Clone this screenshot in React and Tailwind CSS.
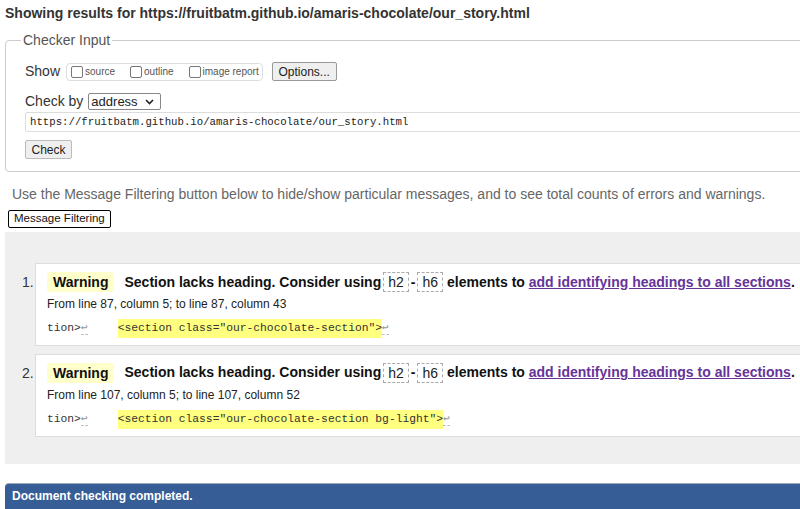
import React from "react";

const sans = { fontFamily: '"Liberation Sans", Arial, sans-serif' };
const mono = { fontFamily: '"Liberation Mono", "DejaVu Sans Mono", monospace' };

const Lf = () => (
  <span className="inline-block border-b border-dashed border-[#bbb] leading-[12px] text-[#999]">↩</span>
);

const Code = ({ children }) => (
  <code className="mx-[2px] inline-block border border-dashed border-[#aaa] bg-white px-[4px] py-[1px] font-normal text-[14px] leading-[16px] text-[#222]" style={sans}>
    {children}
  </code>
);

const Box = ({ label, first }) => (
  <>
    <span className={`${first ? "" : "ml-[15px]"} inline-block h-[12px] w-[12px] rounded-[2px] border border-[#777] bg-white`} />
    <span className="ml-[2px]">{label}</span>
  </>
);

const Message = ({ n, from, extract }) => (
  <li className="flex items-start">
    <span className="w-[30px] shrink-0 pt-[9px] pl-[17px] text-[14px] text-[#333]">{n}.</span>
    <div className="flex-1 border border-[#ddd] bg-white pl-[11px] pt-[8px] pb-[7px]">
      <p className="flex h-[20px] items-center text-[14px] font-bold text-[#111]">
        <span className="rounded-[3px] bg-[#ffffcc] px-[6px] leading-[20px]">Warning</span>
        <span className="ml-[10px]">Section lacks heading. Consider using</span>
        <Code>h2</Code>
        <span>-</span>
        <Code>h6</Code>
        <span className="ml-[2px]">elements to&nbsp;</span>
        <a href="#" className="text-[#663399] underline">add identifying headings to all sections</a>
        <span>.</span>
      </p>
      <p className="mt-[5px] text-[12px] leading-[14px] text-[#222]">{from}</p>
      <p className="mt-[8px] flex items-center text-[11.3px] text-[#333]" style={mono}>
        <span>tion&gt;</span>
        <Lf />
        <span className="ml-[30px] bg-[#ffff80] py-[1px]">{extract}</span>
        <Lf />
      </p>
    </div>
  </li>
);

export default function App() {
  return (
    <div className="w-[800px] h-[509px] overflow-hidden bg-white text-[#222]" style={sans}>
      <div className="w-[860px] px-[5px]">
        <h2 className="pt-[5px] text-[14px] font-bold leading-[16px] text-[#333]">
          Showing results for https://fruitbatm.github.io/amaris-chocolate/our_story.html
        </h2>

        <fieldset className="mt-[11px] rounded-[4px] border border-[#ccc] pl-[19px] pb-[10px]">
          <legend className="-ml-[4px] px-[2px] text-[14px] leading-[16px] text-[#555]">Checker Input</legend>

          <div className="mt-[13px] flex items-center">
            <span className="text-[14px] text-[#333]">Show</span>
            <div className="ml-[6px] flex h-[18px] items-center rounded-[4px] border border-[#ddd] pl-[4px] pr-[3px] text-[10px] text-[#555]">
              <Box label="source" first />
              <Box label="outline" />
              <Box label="image report" />
            </div>
            <button className="ml-[9px] h-[19px] w-[65px] rounded-[2px] border border-[#999] bg-[#efefef] text-[12px] leading-[16px] text-[#222]">
              Options...
            </button>
          </div>

          <div className="mt-[11px] flex items-center">
            <span className="text-[14px] leading-[17px] text-[#333]">Check by</span>
            <div className="ml-[5px] flex h-[17px] w-[73px] items-center justify-between rounded-[2px] border border-[#888] bg-white pl-[2px] pr-[6px] text-[13px] leading-[15px] text-[#222]">
              <span>address</span>
              <svg width="9" height="6" viewBox="0 0 9 6">
                <path d="M1 1l3.5 3.5L8 1" fill="none" stroke="#222" strokeWidth="1.6" />
              </svg>
            </div>
          </div>

          <div className="mt-[2px] flex h-[20px] items-center rounded-[2px] border border-[#ddd] bg-white pl-[4px] text-[10.7px] text-[#222]" style={mono}>
            https://fruitbatm.github.io/amaris-chocolate/our_story.html
          </div>

          <button className="mt-[8px] h-[19px] w-[47px] rounded-[2px] border border-[#bbb] bg-[#efefef] text-[12px] leading-[16px] text-[#222]">
            Check
          </button>
        </fieldset>

        <p className="mt-[14px] pl-[7px] text-[14px] leading-[16px] text-[#666]">
          Use the Message Filtering button below to hide/show particular messages, and to see total counts of errors and warnings.
        </p>
        <button className="ml-[3px] mt-[8px] h-[18px] rounded-[2px] border border-black bg-white px-[5px] text-[11.5px] leading-[15px] text-[#111]">
          Message Filtering
        </button>

        <div className="mt-[3px] bg-[#efefef] pt-[31px] pb-[27px]">
          <ol className="flex flex-col gap-[8px]">
            <Message
              n={1}
              from="From line 87, column 5; to line 87, column 43"
              extract={'<section class="our-chocolate-section">'}
            />
            <Message
              n={2}
              from="From line 107, column 5; to line 107, column 52"
              extract={'<section class="our-chocolate-section bg-light">'}
            />
          </ol>
        </div>

        <div className="mt-[19px] flex h-[26px] items-center rounded-tl-[4px] border-t border-[#9ab] bg-[#375d96] pl-[7px] text-[12px] font-bold text-white">
          Document checking completed.
        </div>
      </div>
    </div>
  );
}
